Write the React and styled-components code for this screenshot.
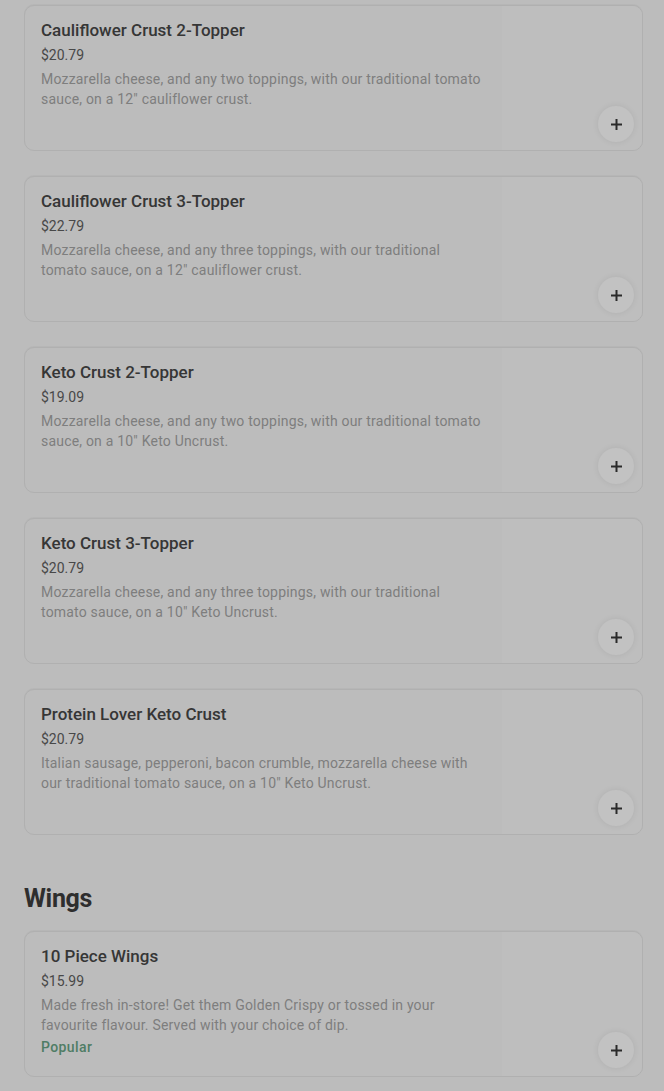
import React from "react";
import styled, { createGlobalStyle } from "styled-components";

const Global = createGlobalStyle`
  html, body { margin: 0; padding: 0; background: #bcbcbc; }
  body { font-family: Roboto, "Liberation Sans", Arial, sans-serif; -webkit-font-smoothing: antialiased; }
`;

const Page = styled.div`
  padding: 5px 21px 40px 24px;
  display: flex;
  flex-direction: column;
`;

const List = styled.div`
  display: flex;
  flex-direction: column;
  gap: 25px;
`;

const SectionTitle = styled.h2`
  margin: 48px 0 16px;
  font-size: 25px;
  line-height: 32px;
  font-weight: 700;
  color: #2e2e2e;
  letter-spacing: -0.3px;
`;

const Card = styled.div`
  position: relative;
  box-sizing: border-box;
  height: ${(p) => p.$h}px;
  border: 1px solid #b0b0b0;
  border-radius: 10px;
  box-shadow: 0 -1px 0 #b6b6b6;
  display: flex;
  background: #bcbcbc;
  overflow: hidden;
`;

const Info = styled.div`
  flex: 1;
  min-width: 0;
  padding: 14px 16px 0 16px;
  display: flex;
  flex-direction: column;
`;

const ImageArea = styled.div`
  width: 140px;
  flex: none;
  background: #bebebe;
`;

const Title = styled.div`
  font-size: 17px;
  line-height: 20px;
  font-weight: 500;
  color: #363636;
`;

const Price = styled.div`
  margin-top: 5px;
  font-size: 14px;
  line-height: 20px;
  color: #484848;
`;

const Desc = styled.div`
  margin-top: 4px;
  font-size: 14px;
  line-height: 20px;
  letter-spacing: 0.2px;
  color: #7e7e7e;
`;

const Badge = styled.div`
  margin-top: 2px;
  font-size: 14px;
  line-height: 20px;
  font-weight: 500;
  letter-spacing: 0.4px;
  color: #4f7d65;
`;

const AddButton = styled.button`
  position: absolute;
  right: 8px;
  bottom: 8px;
  width: 36px;
  height: 36px;
  border-radius: 50%;
  border: none;
  padding: 0;
  background: #c2c2c2;
  box-shadow: 0 0 6px rgba(0, 0, 0, 0.08);
  display: flex;
  align-items: center;
  justify-content: center;
  cursor: pointer;
`;

const Plus = () => (
  <svg width="13" height="13" viewBox="0 0 13 13">
    <path d="M6.5 1v11M1 6.5h11" stroke="#2a2a2a" strokeWidth="2" />
  </svg>
);

const Item = ({ title, price, desc, badge, h = 146 }) => (
  <Card $h={h}>
    <Info>
      <Title>{title}</Title>
      <Price>{price}</Price>
      <Desc>{desc}</Desc>
      {badge && <Badge>{badge}</Badge>}
    </Info>
    <ImageArea />
    <AddButton aria-label="Add">
      <Plus />
    </AddButton>
  </Card>
);

const pizzas = [
  {
    title: "Cauliflower Crust 2-Topper",
    price: "$20.79",
    desc: "Mozzarella cheese, and any two toppings, with our traditional tomato sauce, on a 12\" cauliflower crust.",
  },
  {
    title: "Cauliflower Crust 3-Topper",
    price: "$22.79",
    desc: "Mozzarella cheese, and any three toppings, with our traditional tomato sauce, on a 12\" cauliflower crust.",
  },
  {
    title: "Keto Crust 2-Topper",
    price: "$19.09",
    desc: "Mozzarella cheese, and any two toppings, with our traditional tomato sauce, on a 10\" Keto Uncrust.",
  },
  {
    title: "Keto Crust 3-Topper",
    price: "$20.79",
    desc: "Mozzarella cheese, and any three toppings, with our traditional tomato sauce, on a 10\" Keto Uncrust.",
  },
  {
    title: "Protein Lover Keto Crust",
    price: "$20.79",
    desc: "Italian sausage, pepperoni, bacon crumble, mozzarella cheese with our traditional tomato sauce, on a 10\" Keto Uncrust.",
  },
];

export default function App() {
  return (
    <>
      <Global />
      <Page>
        <List>
          {pizzas.map((p) => (
            <Item key={p.title} {...p} />
          ))}
        </List>
        <SectionTitle>Wings</SectionTitle>
        <List>
          <Item
            title="10 Piece Wings"
            price="$15.99"
            desc="Made fresh in-store! Get them Golden Crispy or tossed in your favourite flavour. Served with your choice of dip."
            badge="Popular"
          />
        </List>
      </Page>
    </>
  );
}
